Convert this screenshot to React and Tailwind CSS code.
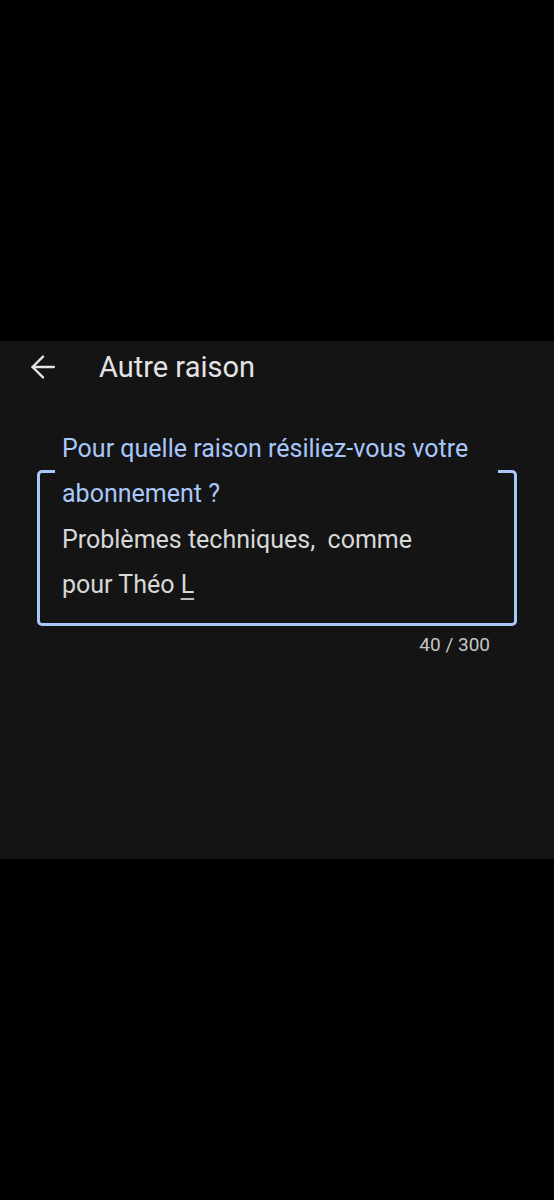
import React from "react";

const BackArrow = () => (
  <svg
    width="24"
    height="24"
    viewBox="0 0 24 24"
    fill="none"
    stroke="#e3e3e3"
    strokeWidth="2.4"
    strokeLinecap="round"
    strokeLinejoin="round"
  >
    <path d="M22.8 12H1.6" />
    <path d="M12 1.6 1.6 12 12 22.4" />
  </svg>
);

const App = () => {
  return (
    <div className="min-h-[1200px] bg-black font-['Roboto',sans-serif]">
      {/* top black area */}
      <div className="h-[341px]" />

      {/* sheet */}
      <div className="h-[518px] bg-[#141414]">
        <div className="flex h-[52px] items-center">
          <div className="ml-[31px]">
            <BackArrow />
          </div>
          <h1 className="ml-[44px] text-[29px] leading-[34px] text-[#e3e3e3]">
            Autre raison
          </h1>
        </div>

        <fieldset className="ml-[37px] mt-[33px] w-[480px] rounded-[5px] border-[3px] border-[#a8c7fa]">
          <legend className="ml-[15px] w-[443px] px-[7px] text-[25px] leading-[45px] text-[#a8c7fa]">
            Pour quelle raison résiliez-vous votre abonnement ?
          </legend>
          <div className="pl-[22px] pb-[16px] pt-[1px] text-[25px] leading-[45px] text-[#d8d8d8]">
            <div>Problèmes techniques,&nbsp; comme</div>
            <div>
              pour Théo{" "}
              <span className="underline decoration-[#bdbdbd] decoration-2 underline-offset-[5px]">
                L
              </span>
            </div>
          </div>
        </fieldset>

        <div className="ml-[37px] mt-[7px] w-[480px] pr-[27px] text-right text-[19px] leading-[24px] text-[#c4c7c5]">
          40 / 300
        </div>
      </div>
    </div>
  );
};

export default App;
